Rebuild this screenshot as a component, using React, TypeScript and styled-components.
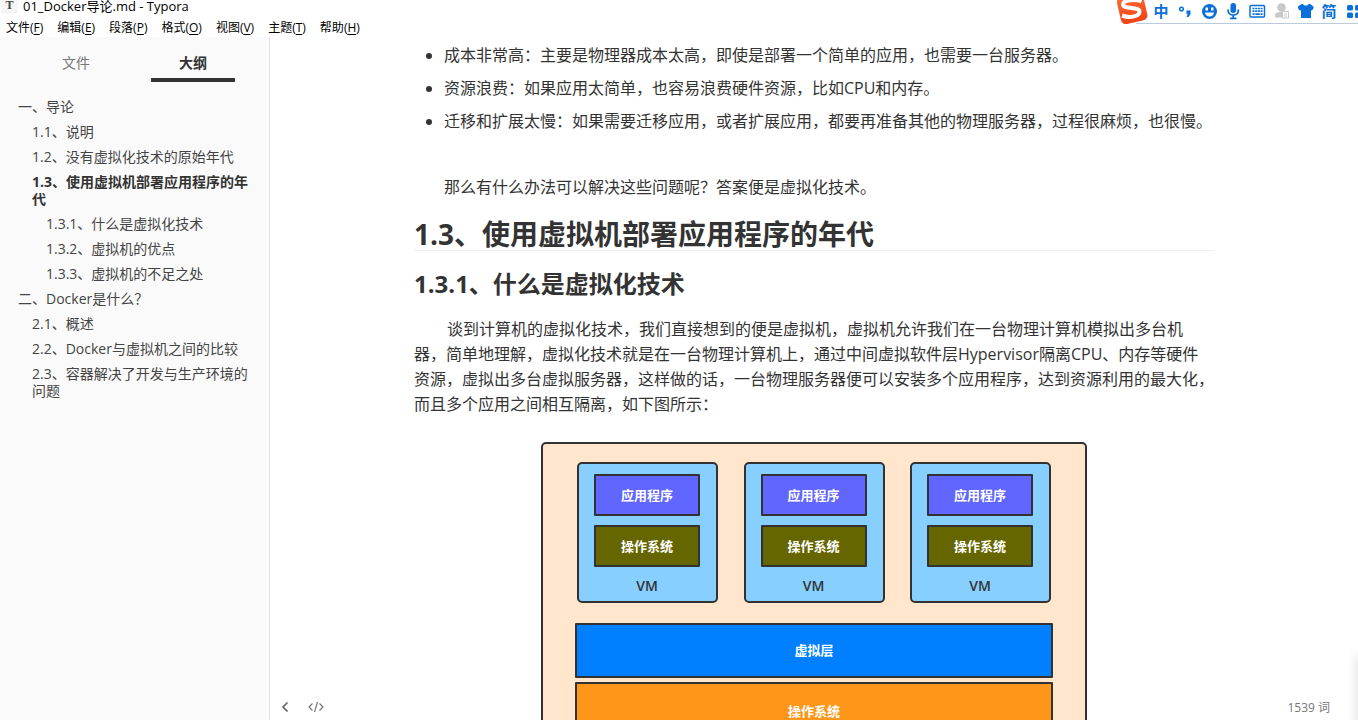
import React from "react";
import styled, { createGlobalStyle } from "styled-components";

const GlobalStyle = createGlobalStyle`
  * { box-sizing: border-box; }
  body {
    margin: 0;
    background: #fff;
    color: #333;
    font-family: "Open Sans", "Noto Sans CJK SC", sans-serif;
    overflow: hidden;
  }
  button { font: inherit; color: inherit; background: none; border: 0; padding: 0; cursor: pointer; }
  h2, h3, p, ul { margin: 0; padding: 0; }
`;

const Window = styled.div`
  position: relative;
  display: flex;
  flex-direction: column;
  height: 100vh;
  overflow: hidden;
`;

const TitleBar = styled.header`
  display: flex;
  align-items: center;
  gap: 6px;
  flex: none;
  height: 13px;
  padding-left: 2px;
  font-size: 13px;
  line-height: 13px;
  color: #000;
`;

const AppIcon = styled.span`
  display: flex;
  align-items: center;
  justify-content: center;
  width: 15px;
  height: 14px;
  margin-bottom: 2px;
  border-radius: 3px;
  background: #f6f6f6;
  box-shadow: 0 0 1px #bbb;
  font-family: "Liberation Serif", serif;
  font-weight: bold;
  font-size: 12px;
  color: #444;
`;

const MenuBar = styled.nav`
  display: flex;
  gap: 14px;
  flex: none;
  padding: 6px 6px 1px;
  font-size: 12px;
  line-height: 17px;
  color: #000;
`;

const MenuItem = styled.button`
  flex: none;
  white-space: nowrap;
  u { text-underline-offset: 2px; }
`;

const Workspace = styled.div`
  display: flex;
  flex: 1;
  min-height: 0;
`;

const Sidebar = styled.aside`
  flex: none;
  width: 270px;
  background: #fafafa;
  border-right: 1px solid #e5e5e5;
`;

const Tabs = styled.div`
  display: flex;
  justify-content: space-between;
  padding: 8px 34px 0;
`;

const Tab = styled.button<{ $active?: boolean }>`
  width: 84px;
  height: 37px;
  padding-top: 1px;
  border-bottom: 4px solid ${(p) => (p.$active ? "#333" : "transparent")};
  font-size: 14px;
  font-weight: ${(p) => (p.$active ? 700 : 400)};
  color: ${(p) => (p.$active ? "#333" : "#777")};
`;

const Outline = styled.ul`
  list-style: none;
  padding: 12px 18px 0;
`;

const OutlineItem = styled.li<{ $level: number; $active?: boolean }>`
  padding: 4px 0 4px ${(p) => p.$level * 14}px;
  font-size: 14px;
  line-height: 17px;
  font-weight: ${(p) => (p.$active ? 700 : 400)};
  a { color: ${(p) => (p.$active ? "#333" : "#444")}; text-decoration: none; }
`;

const Editor = styled.main`
  position: relative;
  flex: 1;
  min-width: 0;
  overflow: hidden;
`;

const Article = styled.article`
  width: 100%;
  max-width: 860px;
  margin: 0 auto;
  padding: 6px 30px 0;
  font-size: 16px;
  line-height: 25px;
`;

const Bullets = styled.ul`
  display: flex;
  flex-direction: column;
  gap: 8px;
  padding-left: 30px;
  margin-bottom: 18px;
  li > p + p { margin-top: 41px; }
`;

const SectionTitle = styled.h2`
  border-bottom: 1px solid #eee;
  font-size: 28px;
  line-height: 32px;
`;

const SubTitle = styled.h3`
  margin: 16px 0;
  font-size: 24px;
  line-height: 34px;
`;

const Paragraph = styled.p`
  text-indent: 33px;
`;

const Diagram = styled.figure`
  display: flex;
  flex-direction: column;
  width: 546px;
  max-width: 100%;
  margin: 25px auto 0;
  padding: 18px 32px 32px;
  border: 2px solid #323232;
  border-radius: 5px;
  background: #ffe6cc;
  font-size: 13px;
  font-weight: 700;
`;

const Machines = styled.div`
  display: flex;
  justify-content: space-between;
  padding: 0 2px;
  margin-bottom: 20px;
`;

const Machine = styled.div`
  display: flex;
  flex-direction: column;
  gap: 9px;
  width: 141px;
  height: 141px;
  padding: 10px 16px 0 15px;
  border: 2px solid #323232;
  border-radius: 5px;
  background: #87cfff;
`;

const Block = styled.div<{ $color: string; $height: number }>`
  display: flex;
  align-items: center;
  justify-content: center;
  height: ${(p) => p.$height}px;
  border: 2px solid #323232;
  border-radius: 1px;
  background: ${(p) => p.$color};
  color: #fff;
`;

const MachineLabel = styled.span`
  text-align: center;
  font-size: 14px;
  font-weight: 600;
  line-height: 20px;
`;

const Stack = styled.div`
  display: flex;
  flex-direction: column;
  gap: 4px;
`;

const StatusBar = styled.footer`
  position: absolute;
  left: 0;
  right: 0;
  bottom: 0;
  display: flex;
  align-items: center;
  justify-content: space-between;
  height: 26px;
  padding: 0 28px 0 8px;
  font-size: 12px;
  color: #777;
`;

const StatusTools = styled.div`
  display: flex;
  gap: 16px;
  button { display: flex; }
`;

const EdgeShade = styled.div`
  position: absolute;
  right: 0;
  bottom: 0;
  width: 10px;
  height: 72px;
  background: linear-gradient(to right, rgba(0, 0, 0, 0), rgba(0, 0, 0, 0.07));
  mask-image: linear-gradient(to bottom, transparent, #000 16px);
`;

const ImeBar = styled.div`
  position: absolute;
  top: 0;
  right: 0;
  display: flex;
  height: 24px;
  width: 244px;
  padding-left: 2px;
  background: linear-gradient(#b9cbe0, #b9cbe0) 100% 100% / 222px 1px no-repeat, #fff;
  overflow: hidden;
`;

const ImeLogo = styled.svg`
  flex: none;
  width: 33px;
  height: 24px;
`;

const ImeButton = styled.button`
  display: flex;
  align-items: center;
  justify-content: center;
  flex: none;
  width: 24px;
  height: 23px;
  color: #0a6fd8;
  font-size: 15px;
  font-weight: 700;
  line-height: 20px;
  span { padding-bottom: 2px; }
`;

const menus = [
  ["文件", "F"],
  ["编辑", "E"],
  ["段落", "P"],
  ["格式", "O"],
  ["视图", "V"],
  ["主题", "T"],
  ["帮助", "H"],
];

const outline = [
  { level: 0, text: "一、导论" },
  { level: 1, text: "1.1、说明" },
  { level: 1, text: "1.2、没有虚拟化技术的原始年代" },
  { level: 1, text: "1.3、使用虚拟机部署应用程序的年代", active: true },
  { level: 2, text: "1.3.1、什么是虚拟化技术" },
  { level: 2, text: "1.3.2、虚拟机的优点" },
  { level: 2, text: "1.3.3、虚拟机的不足之处" },
  { level: 0, text: "二、Docker是什么？" },
  { level: 1, text: "2.1、概述" },
  { level: 1, text: "2.2、Docker与虚拟机之间的比较" },
  { level: 1, text: "2.3、容器解决了开发与生产环境的问题" },
];

const ImeIcon = ({ children }: { children: React.ReactNode }) => (
  <svg width="24" height="23" viewBox="0 0 24 23" fill="currentColor" aria-hidden="true">
    {children}
  </svg>
);

const Ime = () => (
  <ImeBar>
    <ImeLogo viewBox="0 0 33 24" aria-hidden="true">
      <defs>
        <linearGradient id="sogou" x1="0" y1="0" x2="0" y2="1">
          <stop offset="0" stopColor="#ff6a35" />
          <stop offset="1" stopColor="#ee4413" />
        </linearGradient>
      </defs>
      <rect x="2.500" y="-5" width="27" height="27.500" rx="5" fill="url(#sogou)" transform="rotate(-13 16 8)" />
      <path
        d="M25.500 1.500C19-1.500 7 0 7 4.500c0 5 16.500 2 16.500 7 0 4.800-9 7-17.500 4"
        fill="none"
        stroke="#fff"
        strokeWidth="4"
      />
    </ImeLogo>
    <ImeButton aria-label="中文输入"><span>中</span></ImeButton>
    <ImeButton aria-label="标点">
      <ImeIcon>
        <circle cx="8.500" cy="9" r="1.800" fill="none" stroke="currentColor" strokeWidth="1.500" />
        <path d="M13.500 10.500h4v3.500l-2 3h-2l1.200-3h-1.200z" />
      </ImeIcon>
    </ImeButton>
    <ImeButton aria-label="表情">
      <ImeIcon>
        <circle cx="12.500" cy="11.500" r="7.500" />
        <rect x="8.500" y="7.500" width="2.500" height="3" fill="#fff" />
        <rect x="14" y="7.500" width="2.500" height="3" fill="#fff" />
        <path d="M8 12.500h9c-.3 2.500-2.200 4-4.500 4S8.300 15 8 12.500z" fill="#fff" />
      </ImeIcon>
    </ImeButton>
    <ImeButton aria-label="语音">
      <ImeIcon>
        <rect x="9.500" y="3" width="5.500" height="10" rx="2.700" />
        <path d="M7.200 9.500v1.500a5 4 0 0 0 10.100 0V9.500M12.200 15v3M9 18.300h6.500" fill="none" stroke="currentColor" strokeWidth="1.800" />
      </ImeIcon>
    </ImeButton>
    <ImeButton aria-label="软键盘">
      <ImeIcon>
        <rect x="5" y="5.500" width="14.500" height="11.500" rx="1" fill="none" stroke="currentColor" strokeWidth="1.500" />
        <path d="M7.500 8.500h10M7.500 11.200h10" stroke="currentColor" strokeWidth="1.700" strokeDasharray="2 .7" />
        <path d="M7.500 14.200h2M10.300 14.200h4.500M15.600 14.200h2" stroke="currentColor" strokeWidth="1.700" />
      </ImeIcon>
    </ImeButton>
    <ImeButton aria-label="账户">
      <ImeIcon>
        <g fill="#c8c8c8">
          <circle cx="12.500" cy="7.500" r="4.300" />
          <path d="M6 17.500V15c0-2 2.500-3 6-3h1v5.500z" />
          <path d="M13.500 11.500h6v6.500h-6z" fill="#fff" stroke="#c8c8c8" />
          <path d="M15 13.500h3v1h-3zM15 15.500h3v1h-3z" />
        </g>
      </ImeIcon>
    </ImeButton>
    <ImeButton aria-label="皮肤">
      <ImeIcon>
        <path d="M8.500 4h1.500c.8 2 4.700 2 5.500 0H17l3.500 2.500c.4 2-1 4-2.500 4V18H8v-7.500c-2 0-3.400-2-3-4z" />
      </ImeIcon>
    </ImeButton>
    <ImeButton aria-label="简体"><span>简</span></ImeButton>
    <ImeButton aria-label="工具箱">
      <ImeIcon>
        <rect x="6" y="5" width="6" height="5.500" rx="1.500" />
        <rect x="14" y="5" width="6" height="5.500" rx="1.500" />
        <rect x="6" y="12.500" width="6" height="5.500" rx="1.500" />
        <rect x="14" y="12.500" width="6" height="5.500" rx="1.500" />
      </ImeIcon>
    </ImeButton>
  </ImeBar>
);

export default function App() {
  return (
    <Window>
      <GlobalStyle />
      <TitleBar>
        <AppIcon aria-hidden="true">T</AppIcon>
        <span>01_Docker导论.md - Typora</span>
      </TitleBar>
      <MenuBar>
        {menus.map(([name, key]) => (
          <MenuItem key={key}>
            {name}(<u>{key}</u>)
          </MenuItem>
        ))}
      </MenuBar>
      <Workspace>
        <Sidebar>
          <Tabs>
            <Tab>文件</Tab>
            <Tab $active>大纲</Tab>
          </Tabs>
          <Outline>
            {outline.map((item) => (
              <OutlineItem key={item.text} $level={item.level} $active={item.active}>
                <a href="#">{item.text}</a>
              </OutlineItem>
            ))}
          </Outline>
        </Sidebar>
        <Editor>
          <Article>
            <Bullets>
              <li>成本非常高：主要是物理器成本太高，即使是部署一个简单的应用，也需要一台服务器。</li>
              <li>资源浪费：如果应用太简单，也容易浪费硬件资源，比如CPU和内存。</li>
              <li>
                <p>迁移和扩展太慢：如果需要迁移应用，或者扩展应用，都要再准备其他的物理服务器，过程很麻烦，也很慢。</p>
                <p>那么有什么办法可以解决这些问题呢？答案便是虚拟化技术。</p>
              </li>
            </Bullets>
            <SectionTitle>1.3、使用虚拟机部署应用程序的年代</SectionTitle>
            <SubTitle>1.3.1、什么是虚拟化技术</SubTitle>
            <Paragraph>
              谈到计算机的虚拟化技术，我们直接想到的便是虚拟机，虚拟机允许我们在一台物理计算机模拟出多台机器，简单地理解，虚拟化技术就是在一台物理计算机上，通过中间虚拟软件层Hypervisor隔离CPU、内存等硬件资源，虚拟出多台虚拟服务器，这样做的话，一台物理服务器便可以安装多个应用程序，达到资源利用的最大化，而且多个应用之间相互隔离，如下图所示：
            </Paragraph>
            <Diagram>
              <Machines>
                {[1, 2, 3].map((n) => (
                  <Machine key={n}>
                    <Block $color="#6066ff" $height={42}>应用程序</Block>
                    <Block $color="#666600" $height={42}>操作系统</Block>
                    <MachineLabel>VM</MachineLabel>
                  </Machine>
                ))}
              </Machines>
              <Stack>
                <Block $color="#0080ff" $height={55}>虚拟层</Block>
                <Block $color="#ff9619" $height={58}>操作系统</Block>
              </Stack>
            </Diagram>
          </Article>
          <StatusBar>
            <StatusTools>
              <button aria-label="隐藏侧栏">
                <svg width="14" height="14" viewBox="0 0 14 14" fill="none" stroke="#666" strokeWidth="1.700">
                  <path d="M9.500 2.500L5 7l4.500 4.500" />
                </svg>
              </button>
              <button aria-label="源代码模式">
                <svg width="16" height="14" viewBox="0 0 16 14" fill="none" stroke="#777" strokeWidth="1.200">
                  <path d="M4.500 3.500L1 7l3.500 3.500M11.500 3.500L15 7l-3.500 3.500M9.500 2l-3 10" />
                </svg>
              </button>
            </StatusTools>
            <span>1539 词</span>
          </StatusBar>
        </Editor>
      </Workspace>
      <Ime />
      <EdgeShade />
    </Window>
  );
}
